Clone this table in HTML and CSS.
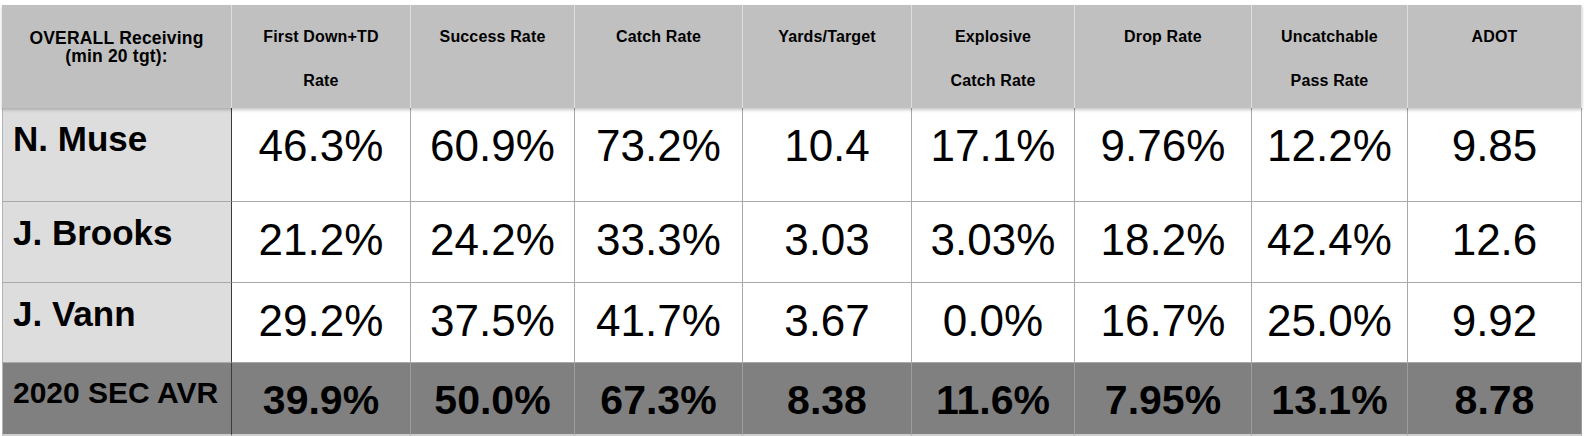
FILE: index.html
```html
<!DOCTYPE html>
<html lang="en">
<head>
<meta charset="utf-8">
<title>OVERALL Receiving</title>
<link rel="stylesheet" href="styles.css">
</head>
<body>
<div class="sheet">
  <div class="row head">
    <div class="cell first"><div class="lead">OVERALL Receiving<br>(min 20 tgt):</div></div>
    <div class="cell">First Down+TD<br>Rate</div>
    <div class="cell">Success Rate</div>
    <div class="cell">Catch Rate</div>
    <div class="cell">Yards/Target</div>
    <div class="cell">Explosive<br>Catch Rate</div>
    <div class="cell">Drop Rate</div>
    <div class="cell">Uncatchable<br>Pass Rate</div>
    <div class="cell">ADOT</div>
  </div>
  <div class="row body r1">
    <div class="cell first">N. Muse</div>
    <div class="cell">46.3%</div>
    <div class="cell">60.9%</div>
    <div class="cell">73.2%</div>
    <div class="cell">10.4</div>
    <div class="cell">17.1%</div>
    <div class="cell">9.76%</div>
    <div class="cell">12.2%</div>
    <div class="cell">9.85</div>
  </div>
  <div class="row body r2">
    <div class="cell first">J. Brooks</div>
    <div class="cell">21.2%</div>
    <div class="cell">24.2%</div>
    <div class="cell">33.3%</div>
    <div class="cell">3.03</div>
    <div class="cell">3.03%</div>
    <div class="cell">18.2%</div>
    <div class="cell">42.4%</div>
    <div class="cell">12.6</div>
  </div>
  <div class="row body r3">
    <div class="cell first">J. Vann</div>
    <div class="cell">29.2%</div>
    <div class="cell">37.5%</div>
    <div class="cell">41.7%</div>
    <div class="cell">3.67</div>
    <div class="cell">0.0%</div>
    <div class="cell">16.7%</div>
    <div class="cell">25.0%</div>
    <div class="cell">9.92</div>
  </div>
  <div class="row avg">
    <div class="cell first">2020 SEC AVR</div>
    <div class="cell">39.9%</div>
    <div class="cell">50.0%</div>
    <div class="cell">67.3%</div>
    <div class="cell">8.38</div>
    <div class="cell">11.6%</div>
    <div class="cell">7.95%</div>
    <div class="cell">13.1%</div>
    <div class="cell">8.78</div>
  </div>
</div>
</body>
</html>
```

FILE: styles.css
```css
html, body {
  margin: 0;
  padding: 0;
  background: #ffffff;
}

body {
  font-family: "Liberation Sans", Arial, Helvetica, sans-serif;
  color: #000;
}

.sheet {
  margin: 5px 0 0 2px;
  width: 1580px;
}

.row {
  display: grid;
  grid-template-columns: 230px 179px 164px 168px 169px 163px 177px 156px 174px;
}

.cell {
  box-sizing: border-box;
  text-align: center;
  border-right: 1px solid #a9a9a9;
  border-bottom: 1px solid #a9a9a9;
  white-space: nowrap;
}

/* header */
.head {
  height: 103px;
  position: relative;
  z-index: 1;
  box-shadow: 0 2px 3px rgba(0, 0, 0, 0.22);
}

.head .cell {
  background: #c0c0c0;
  border-right: 1px solid #dedede;
  border-bottom: none;
  font-weight: bold;
  font-size: 16px;
  letter-spacing: 0.15px;
  line-height: 44px;
  padding-top: 10px;
}

.head .cell.first {
  padding-top: 24px;
}

.head .lead {
  font-size: 17.5px;
  line-height: 18px;
  letter-spacing: 0.2px;
}

/* body rows */
.body .cell {
  background: #ffffff;
  font-size: 44px;
  line-height: 44px;
  padding-top: 16px;
}

.r1 { height: 94px; }
.r2 { height: 81px; }
.r3 { height: 80px; }

.body .cell.first,
.avg .cell.first {
  text-align: left;
  padding-left: 10px;
  font-weight: bold;
  border-right: 1px solid #3c3c3c;
  border-left: 1px solid #b4b4b4;
}

.body .cell.first {
  background: #dddddd;
  font-size: 35px;
  line-height: 35px;
  padding-top: 13px;
}

/* average row */
.avg {
  height: 73px;
}

.avg .cell {
  background: #808080;
  font-weight: bold;
  font-size: 41px;
  line-height: 41px;
  padding-top: 17px;
  border-right: 1px solid #9c9c9c;
  border-bottom: 2px solid #cfcfcf;
}

.avg .cell.first {
  font-size: 30px;
  line-height: 30px;
  padding-top: 15px;
}
```
